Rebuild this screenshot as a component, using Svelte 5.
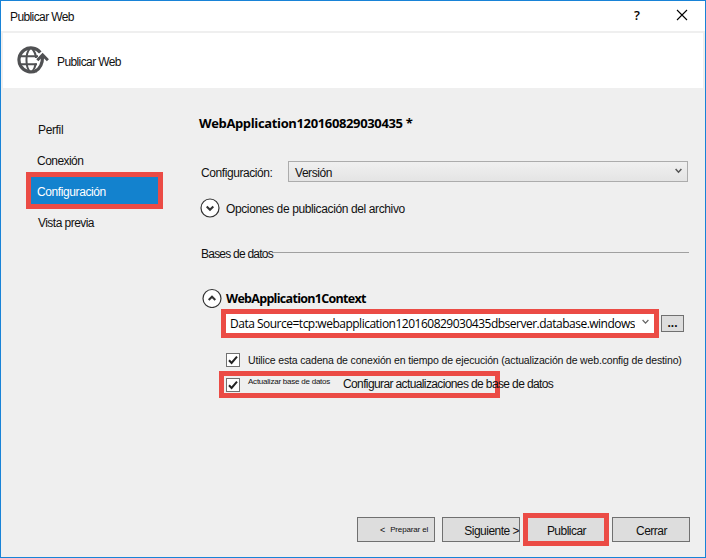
<script>
  const steps = [
    { label: 'Perfil', cls: 'perfil' },
    { label: 'Conexión', cls: 'conexion' },
    { label: 'Configuración', cls: 'selected' },
    { label: 'Vista previa', cls: 'vista' }
  ];
</script>

{#snippet check()}
  <svg class="check" width="14" height="14" viewBox="0 0 14 14">
    <rect x=".5" y=".5" width="13" height="13" fill="#fff" stroke="#707070" />
    <path d="M3 7.2 5.6 10 11 3.6" fill="none" stroke="#222" stroke-width="2" />
  </svg>
{/snippet}

<div class="window">
  <div class="titlebar">
    <span class="t name">Publicar Web</span>
    <span class="help">?</span>
    <svg width="12" height="12" viewBox="0 0 12 12"><path d="M1 1 11 11M11 1 1 11" stroke="#000" stroke-width="1.1" fill="none" /></svg>
  </div>

  <header>
    <svg width="34" height="30" viewBox="0 0 34 30" fill="none" stroke="#505153">
      <path d="M24.3 6.4A12 12 0 1 0 20.5 24.6" stroke-width="3.2" />
      <path d="M14 2.5C9.3 7 9.3 21 14 26M16 2.5C18.5 5.3 19.8 8 20 12M16 26C18 23.5 19.3 20.5 19.8 17.5" stroke-width="2" />
      <path d="M4 10.3H22M3.5 18.2H21" stroke-width="2" />
      <path d="M19.5 25C24.5 22.4 26.6 17 26.6 10" stroke-width="3.2" />
      <path d="M21.3 14.2 26.6 8.9 31.9 14.2" stroke-width="2.9" />
    </svg>
    <span class="t name">Publicar Web</span>
  </header>

  <div class="body">
    <nav>
      {#each steps as s}
        <div class="step {s.cls}"><span class="t">{s.label}</span></div>
      {/each}
    </nav>

    <main>
      <h1>WebApplication120160829030435 *</h1>

      <div class="config">
        <span class="t label">Configuración:</span>
        <div class="select">
          <span class="t">Versión</span>
          <svg width="7" height="6" viewBox="0 0 7 6"><path d="M.6 1 3.5 4.2 6.4 1" fill="none" stroke="#555" stroke-width="1.5" /></svg>
        </div>
      </div>

      <div class="expander files">
        <svg width="20" height="20" viewBox="0 0 20 20" fill="none"><circle cx="10" cy="10" r="9" fill="#fff" stroke="#333" stroke-width="1.2" /><path d="M6.7 8.5 10 11.8 13.3 8.5" stroke="#333" stroke-width="2" /></svg>
        <span class="t">Opciones de publicación del archivo</span>
      </div>

      <div class="group">
        <span class="t">Bases de datos</span>
        <i></i>
      </div>

      <div class="expander context">
        <svg width="20" height="20" viewBox="0 0 20 20" fill="none"><circle cx="10" cy="10.5" r="9" fill="#fff" stroke="#333" stroke-width="1.2" /><path d="M6.7 12 10 8.7 13.3 12" stroke="#333" stroke-width="2" /></svg>
        <h2>WebApplication1Context</h2>
      </div>

      <div class="source">
        <div class="combo">
          <span class="value">Data Source=tcp:webapplication120160829030435dbserver.database.windows</span>
          <svg width="7" height="6" viewBox="0 0 7 6"><path d="M.6 1 3.5 4.2 6.4 1" fill="none" stroke="#666" stroke-width="1.2" /></svg>
        </div>
        <button class="more">...</button>
      </div>

      <div class="option">
        {@render check()}
        <span class="t runtime">Utilice esta cadena de conexión en tiempo de ejecución (actualización de web.config de destino)</span>
      </div>

      <div class="update">
        {@render check()}
        <span class="t small">Actualizar base de datos</span>
        <span class="t updates">Configurar actualizaciones de base de datos</span>
      </div>
    </main>
  </div>

  <footer>
    <button class="prev"><span class="lt">&lt;</span><span class="t">Preparar el</span></button>
    <button class="next"><span class="t">Siguiente &gt;</span></button>
    <button class="publish"><span class="t">Publicar</span></button>
    <button class="close"><span class="t">Cerrar</span></button>
  </footer>
</div>

<style>
  * { box-sizing: border-box; }
  .window {
    width: 706px; height: 558px; overflow: hidden;
    display: flex; flex-direction: column;
    background: #efefef; border: 1px solid #1883d7;
    font: 12px/16px "Liberation Sans", Arial, sans-serif; color: #111;
  }
  svg { display: block; flex: none; }
  .t { white-space: nowrap; letter-spacing: -.45px; }
  .name { letter-spacing: -.6px; }

  .titlebar { flex: none; height: 30px; background: #fff; display: flex; align-items: center; padding: 0 17px 2px 9px; }
  .titlebar .name { flex: 1; padding-top: 3px; }
  .help { font: 600 13px/16px "Open Sans", sans-serif; color: #000; margin-right: 36px; }

  header { flex: none; height: 55px; margin: 2px 2px 0; background: #fff; display: flex; align-items: center; padding-left: 13px; }
  header svg { margin-top: 1px; }
  header .name { margin-left: 7px; padding-top: 2px; }

  .body { flex: 1; display: flex; }
  nav { width: 198px; flex: none; padding: 26px 0 0 25px; }
  .step { height: 31px; display: flex; align-items: center; padding-left: 11px; }
  .step.perfil, .step.vista { padding-left: 12px; }
  .perfil .t { letter-spacing: -.35px; }
  .conexion .t, .vista .t { letter-spacing: -.54px; }
  .step.selected { width: 137px; height: 37px; margin: -4px 0 -2px; padding: 3px 0 0 6px; border: 5px solid #eb4b45; background: #1382ce; color: #fff; }
  .selected .t { letter-spacing: -.4px; }

  main { flex: 1; display: flex; flex-direction: column; align-items: flex-start; padding-top: 26px; }
  h1, h2 { margin: 0; font: 700 13px/18px "Open Sans", sans-serif; color: #000; white-space: nowrap; letter-spacing: -.36px; }
  h2 { font-size: 12.5px; letter-spacing: -.7px; padding-top: 1px; }

  .config { height: 21px; margin: 29px 0 0 2px; display: flex; align-items: center; }
  .label { width: 87px; padding-top: 3px; letter-spacing: -.42px; }
  .select { width: 400px; height: 21px; border: 1px solid #acacac; background: linear-gradient(#f0f0f0, #e4e4e4); display: flex; align-items: center; justify-content: space-between; padding: 0 5px 0 6px; }
  .select .t { padding-top: 3px; }
  .select svg { margin-top: -2px; }

  .expander { display: flex; align-items: center; }
  .files { margin: 16px 0 0 2px; height: 20px; }
  .files svg { margin-left: -1px; margin-right: 6px; }
  .files .t { letter-spacing: -.38px; padding-top: 2px; }

  .group { width: 488px; height: 16px; margin: 28px 0 0 2px; display: flex; }
  .group .t { letter-spacing: -.77px; }
  .group i { flex: 1; height: 1px; margin-top: 6px; background: #a0a0a0; }

  .context { margin: 26px 0 0 3px; height: 20px; }
  .context svg { margin-right: 4px; }
  .source { display: flex; align-items: center; margin: 1px 0 0 22px; }
  .combo { width: 438px; height: 29px; border: 5px solid #eb4b45; background: #fff; display: flex; align-items: center; padding: 0 5px 0 4px; }
  .value { width: 405px; overflow: hidden; white-space: nowrap; font: 12px/18px "Open Sans", sans-serif; letter-spacing: -.5px; color: #000; }
  .combo svg { margin: -3px 0 0 7px; }
  button { border: 1px solid #707070; background: #ddd; padding: 0; margin: 0; font: inherit; color: #111; border-radius: 0; }
  .more { width: 23px; height: 17px; margin-left: 2px; line-height: 15px; font-weight: 700; }

  .option { height: 14px; margin: 15px 0 0 27px; display: flex; align-items: center; }
  .check { margin-right: 8px; }
  .runtime { font-size: 10.5px; letter-spacing: -.16px; }
  .update { width: 281px; height: 27px; margin: 4px 0 0 20px; border: 5px solid #eb4b45; display: flex; align-items: center; padding-left: 2px; }
  .small { width: 95px; flex: none; font-size: 8px; letter-spacing: -.23px; padding-bottom: 6px; }
  .updates { letter-spacing: -.62px; position: relative; z-index: 1; padding-bottom: 1px; }

  footer { flex: none; height: 44px; display: flex; align-items: center; justify-content: flex-end; padding: 0 15px 11px 0; }
  footer button { width: 78px; height: 25px; display: flex; align-items: center; justify-content: center; }
  footer .t { letter-spacing: -.52px; padding: 3px 0 0 1px; }
  .prev { margin-right: 7px; }
  .prev .lt { font-size: 9px; margin: 1px 5px 0 16px; }
  .prev .t { font-size: 8px; letter-spacing: -.15px; padding: 0; }
  footer .next { margin-right: 3px; justify-content: flex-end; padding-right: 0; }
  footer .publish { width: 86px; height: 33px; border: 5px solid #eb4b45; margin-right: 3px; }
</style>
